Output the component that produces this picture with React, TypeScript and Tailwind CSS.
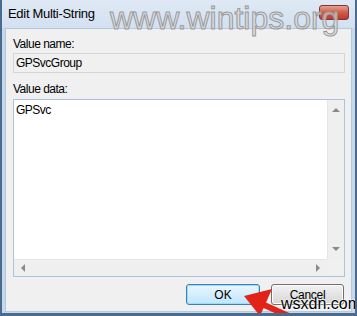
const font = "font-['Liberation_Sans',Arial,sans-serif]"

const Arrow = ({ dir }: { dir: 'up' | 'down' | 'left' | 'right' }) => {
	const pts = {
		up: '0,4 4,0 8,4',
		down: '0,0 8,0 4,4',
		left: '4,0 4,8 0,4',
		right: '0,0 0,8 4,4',
	}[dir]
	const vertical = dir === 'up' || dir === 'down'
	return (
		<svg width={vertical ? 8 : 4} height={vertical ? 4 : 8} viewBox={vertical ? '0 0 8 4' : '0 0 4 8'}>
			<polygon points={pts} fill="#8a8a8a" />
		</svg>
	)
}

const App = () => {
	return (
		<div className={`relative w-[357px] h-[316px] overflow-hidden bg-[#c6d8ec] border-l-2 border-r-2 border-b-[3px] border-[#4a6a8e] ${font} text-black flex flex-col`}>
			{/* title bar */}
			<div className="h-[28px] shrink-0 flex items-center pl-[6px] bg-gradient-to-b from-[#dfe9f5] to-[#d2e0f0]">
				<span className="text-[13px] tracking-[-0.3px]">Edit Multi-String</span>
			</div>
			<div className="absolute top-[5px] right-[6px] w-[30px] h-[15px] rounded-[3px] border border-[#7a3a36] bg-gradient-to-b from-[#e5a093] via-[#cf5b4b] to-[#c0392b]" />
			{/* watermark */}
			<div className="absolute top-0 left-[108px] text-[32px] leading-[36px] text-[#dadada]/70 [-webkit-text-stroke:1px_#9a9a9a]">
				www.wintips.org
			</div>

			{/* content */}
			<div className="flex-1 mx-[3px] mb-[1px] bg-[#f0f0f0] border border-[#b6c8dd] flex flex-col pl-[7px] pr-[6px]">
				<div className="text-[12px] tracking-[-0.5px] mt-[8px] leading-[14px]">Value name:</div>
				<div className="mt-[2px] h-[20px] border border-[#d5d5d5] bg-[#f0f0f0] flex items-center pl-[2px] text-[12px] tracking-[-0.5px]">
					GPSvcGroup
				</div>
				<div className="text-[12px] tracking-[-0.5px] mt-[9px] leading-[14px]">Value data:</div>
				<div className="mt-[3px] h-[178px] border border-[#a9c3e0] bg-white flex flex-col">
					<div className="flex-1 flex">
						<div className="flex-1 pl-[2px] pt-[3px] text-[12px] tracking-[-0.5px] leading-[14px]">GPSvc</div>
						<div className="w-[17px] bg-[#efefef] border-l border-[#e6e6e6] flex flex-col items-center justify-between py-[8px]">
							<Arrow dir="up" />
							<Arrow dir="down" />
						</div>
					</div>
					<div className="h-[17px] flex">
						<div className="flex-1 bg-[#efefef] border-t border-[#e6e6e6] flex items-center justify-between px-[7px]">
							<Arrow dir="left" />
							<Arrow dir="right" />
						</div>
						<div className="w-[17px] bg-[#f0f0f0]" />
					</div>
				</div>
				<div className="flex justify-end gap-[11px] mt-[7px] pr-[1px]">
					<button className="w-[74px] h-[21px] rounded-[3px] border border-[#3c7fb1] bg-gradient-to-b from-[#eaf6fd] to-[#bee6fd] text-[12px] flex items-center justify-center shadow-[inset_0_0_0_1px_#9fdcfb]">
						OK
					</button>
					<button className="w-[73px] h-[21px] rounded-[3px] border border-[#707070] bg-gradient-to-b from-[#f2f2f2] to-[#d5d5d5] text-[12px] tracking-[-0.3px] flex items-center justify-center shadow-[inset_0_0_0_1px_#fcfcfc]">
						Cancel
					</button>
				</div>
			</div>

			{/* red arrow */}
			<svg className="absolute left-0 top-0 pointer-events-none" width="357" height="316" viewBox="0 0 357 316">
				<line x1="260" y1="304" x2="300" y2="322" stroke="#e2231a" strokeWidth="6" />
				<polygon points="242,296 270,289 258,316" fill="#e2231a" />
			</svg>
			{/* second watermark */}
			<div className="absolute left-[279px] top-[295px] text-[16px] leading-[18px] text-black [text-shadow:0_0_2px_#fff,0_0_2px_#fff]">
				wsxdn.com
			</div>
		</div>
	)
}

export default App
